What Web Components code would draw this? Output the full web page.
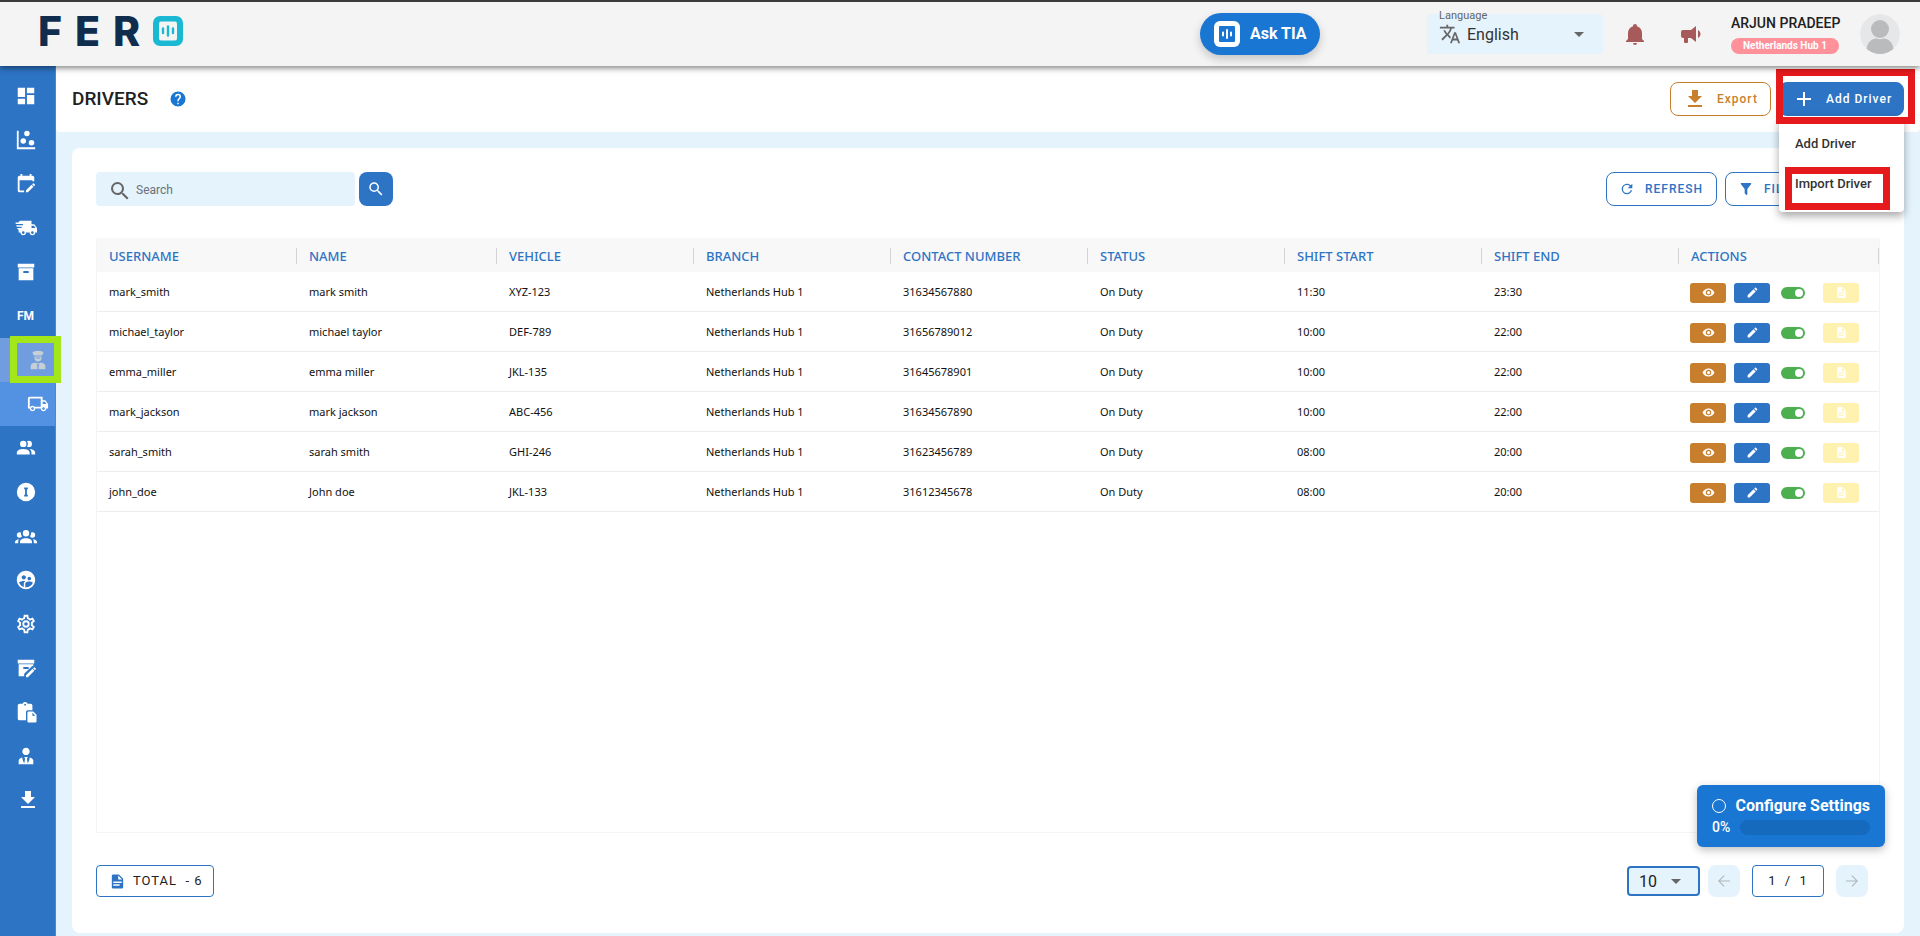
<!DOCTYPE html>
<html lang="en">
<head>
<meta charset="utf-8">
<title>Fero - Drivers</title>
<style>
  html, body { margin: 0; }
  body {
    min-height: 100vh;
    display: flex;
    font-family: Roboto, "Liberation Sans", sans-serif;
    color: #212121;
    --blue: #2d74c5;
    --bright: #1976d2;
    --tint: #e5f3fd;
    --amber: #c77f2e;
    background: #e5f3fd;
  }
</style>
</head>
<body>
<fero-app></fero-app>
<script>
const ICONS = {
  dashboard: 'M13,3V9H21V3M13,21H21V11H13M3,21H11V15H3M3,13H11V3H3V13Z',
  scatter: 'M2,2H4V20H22V22H2V2M9,10A3,3 0 0,1 12,13A3,3 0 0,1 9,16A3,3 0 0,1 6,13A3,3 0 0,1 9,10M13,2A3,3 0 0,1 16,5A3,3 0 0,1 13,8A3,3 0 0,1 10,5A3,3 0 0,1 13,2M18,12A3,3 0 0,1 21,15A3,3 0 0,1 18,18A3,3 0 0,1 15,15A3,3 0 0,1 18,12Z',
  calendar: 'M19,3H18V1H16V3H8V1H6V3H5A2,2 0 0,0 3,5V19A2,2 0 0,0 5,21H10V19H5V8H19V9H21V5A2,2 0 0,0 19,3M21.7,13.35L20.7,14.35L18.65,12.35L19.65,11.35C19.85,11.14 20.19,11.13 20.42,11.35L21.7,12.63C21.89,12.83 21.89,13.15 21.7,13.35M12,18.94L18.07,12.88L20.12,14.88L14.06,21H12V18.94Z',
  truckFast: 'M3,13.5L2.25,12H7.5L6.9,10.5H2L1.25,9H9.05L8.45,7.5H1.11L0.25,6H4A2,2 0 0,1 6,4H18V8H21L24,12V17H22A3,3 0 0,1 19,20A3,3 0 0,1 16,17H12A3,3 0 0,1 9,20A3,3 0 0,1 6,17H4V13.5H3M19,18.5A1.5,1.5 0 0,0 20.5,17A1.5,1.5 0 0,0 19,15.5A1.5,1.5 0 0,0 17.5,17A1.5,1.5 0 0,0 19,18.5M20.5,9.5H18V12H22.46L20.5,9.5M9,18.5A1.5,1.5 0 0,0 10.5,17A1.5,1.5 0 0,0 9,15.5A1.5,1.5 0 0,0 7.5,17A1.5,1.5 0 0,0 9,18.5Z',
  archive: 'M3,3H21V7H3V3M4,8H20V21H4V8M9.5,11A0.5,0.5 0 0,0 9,11.5V13H15V11.5A0.5,0.5 0 0,0 14.5,11H9.5Z',
  driver: 'M12 2C9 2 6.500 2.800 5.800 4.300L7.800 7.200H16.200L18.200 4.300C17.500 2.800 15 2 12 2M8 8.200V9.500C8 12 9.800 13.600 12 13.600S16 12 16 9.500V8.200H8M9.400 9.400H14.600V10.300H9.400V9.400M9 14.600C6 15 4 16.300 4 18.500V22H11.300V18.800L10.700 16.500H13.300L12.700 18.800V22H20V18.500C20 16.300 18 15 15 14.600L14.200 15.500H9.800L9 14.600Z',
  truck: 'M18 18.5C18.83 18.5 19.5 17.83 19.5 17C19.5 16.17 18.83 15.5 18 15.5C17.17 15.5 16.5 16.17 16.5 17C16.5 17.83 17.17 18.5 18 18.5M19.5 9.5H17V12H21.46L19.5 9.5M6 18.5C6.83 18.5 7.5 17.83 7.5 17C7.5 16.17 6.83 15.5 6 15.5C5.17 15.5 4.5 16.17 4.5 17C4.5 17.83 5.17 18.5 6 18.5M20 8L23 12V17H21C21 18.66 19.66 20 18 20C16.34 20 15 18.66 15 17H9C9 18.66 7.66 20 6 20C4.34 20 3 18.66 3 17H1V6C1 4.89 1.89 4 3 4H17V8H20M3 6V15H3.76C4.31 14.39 5.11 14 6 14C6.89 14 7.69 14.39 8.24 15H15V6H3Z',
  users: 'M16 17V19H2V17S2 13 9 13 16 17 16 17M12.5 7.5A3.5 3.5 0 1 0 9 11A3.5 3.5 0 0 0 12.5 7.5M15.94 13A5.32 5.32 0 0 1 18 17V19H22V17S22 13.37 15.94 13M15 4A3.39 3.39 0 0 0 13.07 4.59A5 5 0 0 1 13.07 10.41A3.39 3.39 0 0 0 15 11A3.5 3.5 0 0 0 15 4Z',
  info: 'M12 2a10 10 0 1 0 0 20 10 10 0 0 0 0-20M10 7h4v2h-1v6h1v2h-4v-2h1V9h-1z',
  group: 'M12,5.5A3.5,3.5 0 0,1 15.5,9A3.5,3.5 0 0,1 12,12.5A3.5,3.5 0 0,1 8.5,9A3.5,3.5 0 0,1 12,5.5M5,8C5.56,8 6.08,8.15 6.53,8.42C6.38,9.85 6.8,11.27 7.66,12.38C7.16,13.34 6.16,14 5,14A3,3 0 0,1 2,11A3,3 0 0,1 5,8M19,8A3,3 0 0,1 22,11A3,3 0 0,1 19,14C17.84,14 16.84,13.34 16.34,12.38C17.2,11.27 17.62,9.85 17.47,8.42C17.92,8.15 18.44,8 19,8M5.5,18.25C5.5,16.18 8.41,14.5 12,14.5C15.59,14.5 18.5,16.18 18.5,18.25V20H5.5V18.25M0,20V18.5C0,17.11 1.89,15.94 4.45,15.6C3.86,16.28 3.5,17.22 3.5,18.25V20H0M24,20H20.5V18.25C20.5,17.22 20.14,16.28 19.55,15.6C22.11,15.94 24,17.11 24,18.5V20Z',
  supervisor: 'M11.99 2c-5.52 0-10 4.48-10 10s4.48 10 10 10 10-4.48 10-10-4.48-10-10-10zm3.61 6.34c1.07 0 1.93.86 1.93 1.93 0 1.07-.86 1.93-1.93 1.93-1.07 0-1.93-.86-1.93-1.93-.01-1.07.86-1.93 1.93-1.93zm-6-1.58c1.3 0 2.36 1.06 2.36 2.36 0 1.3-1.06 2.36-2.36 2.36s-2.36-1.06-2.36-2.36c0-1.31 1.05-2.36 2.36-2.36zm0 9.13v3.75c-2.4-.75-4.3-2.6-5.14-4.96 1.05-1.12 3.67-1.69 5.14-1.69.53 0 1.2.08 1.9.22-1.64.87-1.9 2.02-1.9 2.68zM11.99 20c-.27 0-.53-.01-.79-.04v-4.07c0-1.42 2.94-2.13 4.4-2.13 1.07 0 2.92.39 3.84 1.15-1.17 2.97-4.06 5.09-7.45 5.09z',
  cog: 'M12,8A4,4 0 0,1 16,12A4,4 0 0,1 12,16A4,4 0 0,1 8,12A4,4 0 0,1 12,8M12,10A2,2 0 0,0 10,12A2,2 0 0,0 12,14A2,2 0 0,0 14,12A2,2 0 0,0 12,10M10,22C9.75,22 9.54,21.82 9.5,21.58L9.13,18.93C8.5,18.68 7.96,18.34 7.44,17.94L4.95,18.95C4.73,19.03 4.46,18.95 4.34,18.73L2.34,15.27C2.21,15.05 2.27,14.78 2.46,14.63L4.57,12.97L4.5,12L4.57,11L2.46,9.37C2.27,9.22 2.21,8.95 2.34,8.73L4.34,5.27C4.46,5.05 4.73,4.96 4.95,5.05L7.44,6.05C7.96,5.66 8.5,5.32 9.13,5.07L9.5,2.42C9.54,2.18 9.75,2 10,2H14C14.25,2 14.46,2.18 14.5,2.42L14.87,5.07C15.5,5.32 16.04,5.66 16.56,6.05L19.05,5.05C19.27,4.96 19.54,5.05 19.66,5.27L21.66,8.73C21.79,8.95 21.73,9.22 21.54,9.37L19.43,11L19.5,12L19.43,13L21.54,14.63C21.73,14.78 21.79,15.05 21.66,15.27L19.66,18.73C19.54,18.95 19.27,19.04 19.05,18.95L16.56,17.95C16.04,18.34 15.5,18.68 14.87,18.93L14.5,21.58C14.46,21.82 14.25,22 14,22H10M11.25,4L10.88,6.61C9.68,6.86 8.62,7.5 7.85,8.39L5.44,7.35L4.69,8.65L6.8,10.2C6.4,11.37 6.4,12.64 6.8,13.8L4.68,15.36L5.43,16.66L7.86,15.62C8.63,16.5 9.68,17.14 10.87,17.38L11.24,20H12.76L13.13,17.39C14.32,17.14 15.37,16.5 16.14,15.62L18.57,16.66L19.32,15.36L17.2,13.81C17.6,12.64 17.6,11.37 17.2,10.2L19.31,8.65L18.56,7.35L16.15,8.39C15.38,7.5 14.32,6.86 13.12,6.62L12.75,4H11.25Z',
  archiveEdit: 'M3 3H21V7H3V3M4 8H20V9.500L18.500 10L15 13.500V11.500C15 11.200 14.800 11 14.500 11H9.500C9.200 11 9 11.200 9 11.500V13H15.300L10 18.300V21H4V8M22.700 13.350L21.700 14.350L19.650 12.350L20.650 11.350C20.850 11.140 21.190 11.130 21.420 11.350L22.700 12.630C22.890 12.830 22.890 13.150 22.700 13.350M12 19.940L19.070 12.880L21.120 14.880L14.060 22H12V19.940Z',
  clipboardFile: 'M11 1A2.800 2.800 0 0 0 8.200 3H5A2 2 0 0 0 3 5V19A2 2 0 0 0 5 21H12V12A2 2 0 0 1 14 10H19V5A2 2 0 0 0 17 3H13.800A2.800 2.800 0 0 0 11 1M11 3A1 1 0 1 1 11 5A1 1 0 1 1 11 3M15 11.500A1.500 1.500 0 0 0 13.500 13V22A1.500 1.500 0 0 0 15 23.500H22A1.500 1.500 0 0 0 23.500 22V15L20 11.500H15M19 12.800L22.200 16H19V12.800Z',
  tie: 'M12 3C14.21 3 16 4.79 16 7S14.21 11 12 11 8 9.21 8 7 9.79 3 12 3M16 13.54C16 14.6 15.72 17.07 13.81 19.83L13 15L13.94 13.12C13.32 13.05 12.67 13 12 13S10.68 13.05 10.06 13.12L11 15L10.19 19.83C8.28 17.07 8 14.6 8 13.54C5.61 14.24 4 15.5 4 17V21H20V17C20 15.5 18.4 14.24 16 13.54Z',
  download: 'M5,20H19V18H5M19,9H15V3H9V9H5L12,16L19,9Z',
  bell: 'M21,19V20H3V19L5,17V11C5,7.9 7.03,5.17 10,4.29C10,4.19 10,4.1 10,4A2,2 0 0,1 12,2A2,2 0 0,1 14,4C14,4.1 14,4.19 14,4.29C16.97,5.17 19,7.9 19,11V17L21,19M14,21A2,2 0 0,1 12,23A2,2 0 0,1 10,21',
  bullhorn: 'M12,8H4A2,2 0 0,0 2,10V14A2,2 0 0,0 4,16H5V20A1,1 0 0,0 6,21H8A1,1 0 0,0 9,20V16H12L17,20V4L12,8M21.5,12C21.5,13.71 20.54,15.26 19,16V8C20.53,8.75 21.5,10.3 21.5,12Z',
  translate: 'M12.87,15.07L10.33,12.56L10.36,12.53C12.1,10.59 13.34,8.36 14.07,6H17V4H10V2H8V4H1V6H12.17C11.5,7.92 10.44,9.75 9,11.35C8.07,10.32 7.3,9.19 6.69,8H4.69C5.42,9.63 6.42,11.17 7.67,12.56L2.58,17.58L4,19L9,14L12.11,17.11L12.87,15.07M18.5,10H16.5L12,22H14L15.12,19H19.87L21,22H23L18.5,10M15.88,17L17.5,12.67L19.12,17H15.88Z',
  magnify: 'M9.5,3A6.5,6.5 0 0,1 16,9.5C16,11.11 15.41,12.59 14.44,13.73L14.71,14H15.5L20.5,19L19,20.5L14,15.5V14.71L13.73,14.44C12.59,15.41 11.11,16 9.5,16A6.5,6.5 0 0,1 3,9.5A6.5,6.5 0 0,1 9.5,3M9.5,5C7,5 5,7 5,9.5C5,12 7,14 9.5,14C12,14 14,12 14,9.5C14,7 12,5 9.5,5Z',
  refresh: 'M17.65,6.35C16.2,4.9 14.21,4 12,4A8,8 0 0,0 4,12A8,8 0 0,0 12,20C15.73,20 18.84,17.45 19.73,14H17.65C16.83,16.33 14.61,18 12,18A6,6 0 0,1 6,12A6,6 0 0,1 12,6C13.66,6 15.14,6.69 16.22,7.78L13,11H20V4L17.65,6.35Z',
  filter: 'M14,12V19.88C14.04,20.18 13.94,20.5 13.71,20.71C13.32,21.1 12.69,21.1 12.3,20.71L10.29,18.7C10.06,18.47 9.96,18.16 10,17.87V12H9.97L4.21,4.62C3.87,4.19 3.95,3.56 4.38,3.22C4.57,3.08 4.78,3 5,3H19C19.22,3 19.43,3.08 19.62,3.22C20.05,3.56 20.13,4.19 19.79,4.62L14.03,12H14Z',
  eye: 'M12,9A3,3 0 0,0 9,12A3,3 0 0,0 12,15A3,3 0 0,0 15,12A3,3 0 0,0 12,9M12,17A5,5 0 0,1 7,12A5,5 0 0,1 12,7A5,5 0 0,1 17,12A5,5 0 0,1 12,17M12,4.5C7,4.5 2.73,7.61 1,12C2.73,16.39 7,19.5 12,19.5C17,19.5 21.27,16.39 23,12C21.27,7.61 17,4.5 12,4.5Z',
  pencil: 'M20.71,7.04C21.1,6.65 21.1,6 20.71,5.63L18.37,3.29C18,2.9 17.35,2.9 16.96,3.29L15.12,5.12L18.87,8.87M3,17.25V21H6.75L17.81,9.93L14.06,6.18L3,17.25Z',
  file: 'M13,9H18.5L13,3.5V9M6,2H14L20,8V20A2,2 0 0,1 18,22H6C4.89,22 4,21.1 4,20V4C4,2.89 4.89,2 6,2M15,18V16H6V18H15M18,14V12H6V14H18Z',
  left: 'M20 11.200H6.800l5.900-5.900L11.700 4.200 4 12l7.700 7.800 1-1.100-5.900-5.900H20z',
  right: 'M4 11.200h13.200l-5.900-5.900 1-1.100L20 12l-7.700 7.800-1-1.100 5.900-5.900H4z',
  caret: 'M7,10L12,15L17,10H7Z',
  plus: 'M19,13H13V19H11V13H5V11H11V5H13V11H19V13Z',
  help: 'M15.07,11.25L14.17,12.17C13.45,12.89 13,13.5 13,15H11V14.5C11,13.39 11.45,12.39 12.17,11.67L13.41,10.41C13.78,10.05 14,9.55 14,9C14,7.89 13.1,7 12,7A2,2 0 0,0 10,9H8A4,4 0 0,1 12,5A4,4 0 0,1 16,9C16,9.88 15.64,10.67 15.07,11.25M13,19H11V17H13M12,2A10,10 0 0,0 2,12A10,10 0 0,0 12,22A10,10 0 0,0 22,12C22,6.47 17.5,2 12,2Z'
};

function define(name, html, setup) {
  const template = document.createElement('template');
  template.innerHTML = html;
  customElements.define(name, class extends HTMLElement {
    constructor() {
      super();
      this.attachShadow({ mode: 'open' }).append(template.content.cloneNode(true));
    }
    connectedCallback() { if (setup) setup(this, this.shadowRoot); }
  });
}

define('fero-icon', `
  <style>
    :host { display: inline-flex; flex: none; width: 24px; height: 24px; }
    svg { width: 100%; height: 100%; fill: currentColor; }
  </style>
  <svg viewBox="0 0 24 24" aria-hidden="true"><path fill-rule="evenodd"/></svg>`,
  (el, root) => root.querySelector('path').setAttribute('d', ICONS[el.getAttribute('name')]));

define('fero-logo', `
  <style>
    :host { display: flex; align-items: center; color: #112d4e; font: 800 41px/30px Inter, sans-serif; letter-spacing: 13px; }
    svg { width: 30px; height: 30px; }
  </style>
  <span>FER</span>
  <svg viewBox="0 0 30 30" aria-hidden="true">
    <rect width="30" height="30" rx="7" fill="#1bb8d4"/>
    <rect x="6" y="5.500" width="18" height="19" rx="2" fill="#f4f4f4"/>
    <path d="M10 12.500v4.500M15 10.500v9M20 12.500v4.500" stroke="#1bb8d4" stroke-width="2.400" stroke-linecap="round"/>
  </svg>`);

define('app-header', `
  <style>
    :host {
      display: flex; align-items: center; box-sizing: border-box; height: 66px;
      padding: 0 20px 0 38px; background: #f4f4f4; border-top: 2px solid #3c3a3a;
      box-shadow: 0 2px 6px rgba(0,0,0,.5); position: relative; z-index: 3;
    }
    fero-logo { margin-bottom: 6px; }
    .ask {
      margin-left: auto; display: flex; align-items: center; gap: 10px; height: 42px; width: 120px;
      box-sizing: border-box; padding: 0 14px; border: 0; border-radius: 21px; background: var(--bright);
      color: #fff; font: 700 16px/20px Roboto, sans-serif; white-space: nowrap; box-shadow: 0 4px 10px rgba(0,0,0,.2);
    }
    .ask svg { width: 26px; height: 26px; flex: none; }
    .lang {
      display: grid; box-sizing: border-box; width: 176px; height: 40px; margin-left: 107px;
      background: var(--tint); border-radius: 4px; position: relative; align-items: center;
    }
    .lang label { position: absolute; left: 12px; top: -4px; font-size: 11px; line-height: 12px; color: #666; }
    .lang > fero-icon, .lang select { grid-area: 1 / 1; }
    .lang > fero-icon { width: 22px; margin-left: 12px; color: #666; pointer-events: none; }
    .lang .caret { width: 24px; justify-self: end; margin-right: 12px; }
    select { appearance: none; height: 40px; border: 0; padding: 0 0 0 40px; background: none; font: 16px Roboto, sans-serif; color: #333; }
    .icon { border: 0; background: none; padding: 0; display: flex; color: #a85a5a; }
    .bell { margin-left: 20px; }
    .horn { margin-left: 32px; }
    .user { margin-left: 28px; width: 113px; display: flex; flex-direction: column; align-items: flex-start; gap: 7px; margin-bottom: -1px; }
    .name { font-weight: 500; font-size: 14px; line-height: 16px; white-space: nowrap; }
    .hub { background: #ff919b; color: #fff; font: 700 10px/16px Roboto, sans-serif; border-radius: 8px; padding: 0 12px; white-space: nowrap; }
    .avatar { width: 40px; height: 40px; border-radius: 50%; margin-left: 16px; }
  </style>
  <fero-logo></fero-logo>
  <button class="ask">
    <svg viewBox="0 0 26 26" aria-hidden="true"><rect width="26" height="26" rx="6" fill="#fff"/><rect x="5" y="5" width="16" height="16" rx="1" fill="#1976d2"/><path d="M9 11.500v3M13 9v8M17 11.500v3" stroke="#fff" stroke-width="2" stroke-linecap="round"/></svg>
    Ask TIA
  </button>
  <div class="lang">
    <label for="lang">Language</label>
    <select id="lang"><option>English</option></select>
    <fero-icon name="translate"></fero-icon>
    <fero-icon class="caret" name="caret"></fero-icon>
  </div>
  <button class="icon bell" aria-label="Notifications"><fero-icon name="bell"></fero-icon></button>
  <button class="icon horn" aria-label="Announcements"><fero-icon name="bullhorn"></fero-icon></button>
  <div class="user"><span class="name">ARJUN PRADEEP</span><span class="hub">Netherlands Hub 1</span></div>
  <svg class="avatar" viewBox="0 0 40 40" aria-hidden="true">
    <circle cx="20" cy="20" r="20" fill="#e6e7e8"/>
    <circle cx="20" cy="15" r="9" fill="#b9bbbd"/>
    <path d="M6.500 35C7.500 28 12 24.500 16 24.500q4 1.500 8 0c4 0 8.500 3.500 9.500 10.500A20 20 0 0 1 6.500 35z" fill="#b9bbbd"/>
  </svg>`);

define('nav-item', `
  <style>
    :host { display: block; height: 44px; position: relative; }
    a { display: flex; box-sizing: border-box; align-items: center; justify-content: center; height: 100%; padding-right: 4px; color: #fff; text-decoration: none; font: 700 12px/16px Roboto, sans-serif; }
    fero-icon { width: 22px; height: 22px; }
    :host([sub]) { background: #5391e2; }
    :host([sub]) a { padding: 0 0 0 20px; }
    :host([active]) { background: #709de0; }
    :host([active]) a { color: #c6cfd4; }
    :host([large]) a { padding: 0; }
    :host([large]) fero-icon { width: 24px; height: 24px; }
  </style>
  <a href="#"></a><slot></slot>`,
  (el, root) => {
    const link = root.querySelector('a');
    link.setAttribute('aria-label', el.getAttribute('label'));
    if (el.hasAttribute('text')) { link.textContent = el.getAttribute('text'); return; }
    const icon = document.createElement('fero-icon');
    icon.setAttribute('name', el.getAttribute('icon'));
    link.append(icon);
  });

/* Annotation frame laid over the content; its user sets place, size and border colour. */
define('mark-frame', `
  <style>
    :host { display: block; position: absolute; box-sizing: border-box; border: 7px solid #e61a1c; pointer-events: none; z-index: 5; }
  </style>`);

define('side-nav', `
  <style>
    :host { display: block; box-sizing: border-box; flex: none; width: 56px; padding-top: 8px; background: var(--blue); border-right: 1px solid #4a88d0; position: relative; z-index: 2; }
    mark-frame { left: 10px; top: -2px; width: 51px; height: 47px; border-color: #a3e61a; }
  </style>
  <nav>
    <nav-item icon="dashboard" label="Dashboard"></nav-item>
    <nav-item icon="scatter" label="Analytics"></nav-item>
    <nav-item icon="calendar" label="Planning"></nav-item>
    <nav-item icon="truckFast" label="Dispatch"></nav-item>
    <nav-item icon="archive" label="Orders"></nav-item>
    <nav-item text="FM" label="FM"></nav-item>
    <nav-item icon="driver" label="Drivers" sub active><mark-frame></mark-frame></nav-item>
    <nav-item icon="truck" label="Vehicles" sub></nav-item>
    <nav-item icon="users" label="Users"></nav-item>
    <nav-item icon="info" label="Items"></nav-item>
    <nav-item icon="group" label="Teams"></nav-item>
    <nav-item icon="supervisor" label="Supervisors"></nav-item>
    <nav-item icon="cog" label="Settings"></nav-item>
    <nav-item icon="archiveEdit" label="Edit orders"></nav-item>
    <nav-item icon="clipboardFile" label="Reports"></nav-item>
    <nav-item icon="tie" label="Customers"></nav-item>
    <nav-item icon="download" label="Downloads" large></nav-item>
  </nav>`);

define('fero-button', `
  <style>
    :host { display: block; }
    button {
      box-sizing: border-box; width: 100%; height: 34px; display: flex; align-items: center; gap: 10px; padding: 0 12px;
      border: 1px solid var(--tone, var(--blue)); border-radius: 8px; background: var(--fill, #fff); color: var(--ink, var(--tone, var(--blue)));
      font: 500 12px/16px Roboto, sans-serif; letter-spacing: 1px; white-space: nowrap;
    }
    :host([compact]) fero-icon { width: 16px; height: 16px; }
  </style>
  <button><fero-icon></fero-icon><slot></slot></button>`,
  (el, root) => {
    const icon = document.createElement('fero-icon');
    icon.setAttribute('name', el.getAttribute('icon'));
    root.querySelector('fero-icon').replaceWith(icon);
  });

define('page-title', `
  <style>
    :host { display: flex; align-items: center; height: 66px; background: #fff; padding: 0 16px; border-radius: 0 0 4px 4px; }
    h1 { margin: 0 21px 0 0; font-weight: 500; font-size: 19px; line-height: 24px; }
    .help { border: 0; padding: 0; background: none; color: var(--bright); display: flex; }
    .help fero-icon { width: 18px; height: 18px; }
    .export { margin-left: auto; width: 101px; --tone: var(--amber); }
    .add { position: relative; z-index: 2; margin-left: 8px; width: 125px; }
    .add fero-button { --fill: var(--blue); --ink: #fff; }
    .menu { position: absolute; top: 34px; left: 0; right: 0; padding: 8px 0; background: #fff; border-radius: 4px; box-shadow: 0 4px 8px rgba(0,0,0,.35); display: flex; flex-direction: column; }
    .menu button { height: 40px; border: 0; background: none; padding: 0 16px; text-align: left; font: 500 13px/18px Roboto, sans-serif; color: #333; }
    .outer { left: -3px; top: -13px; width: 139px; height: 55px; }
    .inner { left: 6px; top: 51px; width: 105px; height: 43px; }
  </style>
  <h1>DRIVERS</h1>
  <button class="help" aria-label="Help"><fero-icon name="help"></fero-icon></button>
  <fero-button class="export" icon="download">Export</fero-button>
  <div class="add">
    <fero-button icon="plus">Add Driver</fero-button>
    <div class="menu" role="menu">
      <button role="menuitem">Add Driver</button>
      <button role="menuitem">Import Driver</button>
      <mark-frame class="inner"></mark-frame>
    </div>
    <mark-frame class="outer"></mark-frame>
  </div>`);

define('driver-toolbar', `
  <style>
    :host { display: flex; align-items: center; gap: 8px; }
    form { display: flex; gap: 4px; margin-right: auto; }
    .box { display: flex; align-items: center; box-sizing: border-box; width: 259px; height: 34px; padding: 4px 12px 0; gap: 4px; background: var(--tint); border-radius: 4px; color: #666; }
    .box input { flex: 1; min-width: 0; border: 0; background: none; outline: 0; padding: 0 0 2px; font: 12px/16px Roboto, sans-serif; }
    .box input::placeholder { color: #6b7277; }
    form button { width: 34px; height: 34px; border: 0; border-radius: 8px; background: var(--blue); color: #fff; display: grid; place-items: center; padding: 0; }
    form button fero-icon { width: 18px; height: 18px; }
    .refresh { width: 111px; }
    .filter { width: 155px; }
  </style>
  <form>
    <label class="box"><fero-icon name="magnify"></fero-icon><input type="text" placeholder="Search" aria-label="Search"></label>
    <button type="button" aria-label="Search drivers"><fero-icon name="magnify"></fero-icon></button>
  </form>
  <fero-button class="refresh" icon="refresh" compact>REFRESH</fero-button>
  <fero-button class="filter" icon="filter" compact>FILTER</fero-button>`);

define('row-actions', `
  <style>
    :host { display: flex; align-items: center; }
    button { width: 36px; height: 20px; padding: 0; border: 0; border-radius: 3px; color: #fff; display: grid; place-items: center; }
    fero-icon { width: 13px; height: 13px; }
    .view { background: var(--amber); }
    .edit { background: var(--blue); margin-left: 8px; }
    .doc { background: #fff1b0; margin-left: 18px; }
    input { appearance: none; box-sizing: border-box; margin: 0 0 0 11px; width: 24px; height: 12px; border-radius: 6px; background: #4caf50; display: flex; justify-content: flex-end; align-items: center; padding-right: 2px; }
    input::before { content: ""; width: 8px; height: 8px; border-radius: 50%; background: #fff; }
  </style>
  <button class="view" aria-label="View"><fero-icon name="eye"></fero-icon></button>
  <button class="edit" aria-label="Edit"><fero-icon name="pencil"></fero-icon></button>
  <input type="checkbox" checked aria-label="Active">
  <button class="doc" aria-label="Documents"><fero-icon name="file"></fero-icon></button>`);

const HEADS = ['USERNAME', 'NAME', 'VEHICLE', 'BRANCH', 'CONTACT NUMBER', 'STATUS', 'SHIFT START', 'SHIFT END', 'ACTIONS'];
const DRIVERS = [
  ['mark_smith', 'mark smith', 'XYZ-123', '31634567880', '11:30', '23:30'],
  ['michael_taylor', 'michael taylor', 'DEF-789', '31656789012', '10:00', '22:00'],
  ['emma_miller', 'emma miller', 'JKL-135', '31645678901', '10:00', '22:00'],
  ['mark_jackson', 'mark jackson', 'ABC-456', '31634567890', '10:00', '22:00'],
  ['sarah_smith', 'sarah smith', 'GHI-246', '31623456789', '08:00', '20:00'],
  ['john_doe', 'John doe', 'JKL-133', '31612345678', '08:00', '20:00']
];

define('driver-table', `
  <style>
    :host { display: block; border: 1px solid #f4f4f4; border-top: 0; }
    table { width: 100%; table-layout: fixed; border-collapse: separate; border-spacing: 0; font-family: "Noto Sans", sans-serif; font-size: 11px; line-height: 16px; color: #111; }
    th:nth-child(-n+2), th:last-child { width: 200px; }
    th { box-sizing: border-box; height: 34px; padding: 2px 0 0; background: #f8f8f8; text-align: left; font-weight: 500; font-size: 13px; color: var(--blue); }
    th span { display: block; padding: 0 12px; border-right: 1px solid #d4d4d4; }
    td { box-sizing: border-box; height: 40px; padding: 0 12px; border-bottom: 1px solid #ededed; }
    td:last-child { padding: 2px 11px 0; }
  </style>
  <table><thead><tr></tr></thead><tbody></tbody></table>`,
  (el, root) => {
    root.querySelector('thead tr').innerHTML = HEADS.map(h => `<th scope="col"><span>${h}</span></th>`).join('');
    root.querySelector('tbody').innerHTML = DRIVERS.map(([user, name, vehicle, phone, start, end]) =>
      '<tr>' + [user, name, vehicle, 'Netherlands Hub 1', phone, 'On Duty', start, end, '<row-actions></row-actions>'].map(c => `<td>${c}</td>`).join('') + '</tr>').join('');
  });

define('table-footer', `
  <style>
    :host { display: flex; align-items: center; padding-right: 12px; }
    .total, .page { box-sizing: border-box; height: 32px; display: flex; align-items: center; border: 1px solid var(--blue); border-radius: 4px; font-size: 13px; line-height: 20px; letter-spacing: 1px; white-space: pre; }
    .total { padding: 0 10px 0 12px; gap: 7px; margin-right: auto; }
    .total fero-icon { width: 17px; height: 17px; color: var(--blue); }
    .size { display: grid; align-items: center; width: 73px; }
    .size select, .size fero-icon { grid-area: 1 / 1; }
    .size fero-icon { justify-self: end; margin-right: 12px; color: #666; pointer-events: none; }
    select { appearance: none; width: 100%; height: 30px; border: 2px solid var(--blue); border-radius: 4px; background: var(--tint); padding: 0 10px; font: 16px Roboto, sans-serif; color: #222; }
    .step { width: 32px; height: 32px; border: 0; border-radius: 8px; background: var(--tint); color: #b0b6ba; padding: 0; display: grid; place-items: center; margin-left: 8px; }
    .step fero-icon { width: 18px; height: 18px; }
    .page { width: 72px; justify-content: center; margin: 0 4px 0 12px; }
    .page i { font-style: normal; padding: 0 4px; }
  </style>
  <div class="total"><fero-icon name="file"></fero-icon><span>TOTAL  - 6</span></div>
  <div class="size"><select aria-label="Rows per page"><option>10</option></select><fero-icon name="caret"></fero-icon></div>
  <button class="step" aria-label="Previous page" disabled><fero-icon name="left"></fero-icon></button>
  <div class="page"><span>1 <i>/</i> 1</span></div>
  <button class="step" aria-label="Next page" disabled><fero-icon name="right"></fero-icon></button>`);

define('setup-progress', `
  <style>
    :host { position: absolute; right: 35px; bottom: 89px; z-index: 4; box-sizing: border-box; width: 188px; height: 62px; padding: 11px 15px; border-radius: 6px; background: var(--bright); color: #fff; box-shadow: 0 3px 8px rgba(0,0,0,.25); display: flex; flex-direction: column; gap: 3px; }
    div { display: flex; align-items: center; justify-content: space-between; white-space: nowrap; }
    .title { font-weight: 700; font-size: 16px; line-height: 20px; }
    .dot { box-sizing: border-box; width: 14px; height: 14px; border: 1px solid #fff; border-radius: 50%; }
    .value { font-weight: 500; font-size: 14px; line-height: 16px; }
    .bar { width: 130px; height: 15px; border-radius: 8px; background: #166abd; }
  </style>
  <div class="title"><span class="dot"></span><span>Configure Settings</span></div>
  <div class="value"><span>0%</span><span class="bar" role="progressbar" aria-valuenow="0" aria-label="Setup"></span></div>`);

define('fero-app', `
  <style>
    :host { flex: 1; min-width: 0; display: flex; flex-direction: column; position: relative; }
    .body { flex: 1; display: flex; }
    main { flex: 1; min-width: 0; display: flex; flex-direction: column; }
    section { flex: 1; display: flex; flex-direction: column; margin: 16px 16px 3px; padding: 24px 24px 36px; background: #fff; border-radius: 8px; }
    driver-table { flex: 1; margin: 32px 0; }
  </style>
  <app-header></app-header>
  <div class="body">
    <side-nav></side-nav>
    <main>
      <page-title></page-title>
      <section>
        <driver-toolbar></driver-toolbar>
        <driver-table></driver-table>
        <table-footer></table-footer>
      </section>
    </main>
  </div>
  <setup-progress></setup-progress>`);
</script>
</body>
</html>
